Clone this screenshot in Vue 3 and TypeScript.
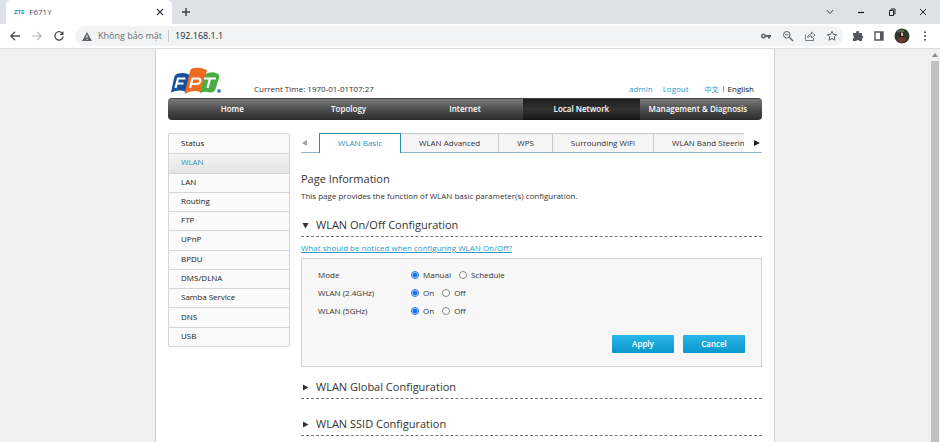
<script setup lang="ts">
import { ref } from 'vue'

interface Option {
  value: string
  label: string
}
interface Setting {
  id: string
  label: string
  value: string
  options: Option[]
}

const navItems = ['Home', 'Topology', 'Internet', 'Local Network', 'Management & Diagnosis']
const activeNav = ref('Local Network')

const sideItems = ['Status', 'WLAN', 'LAN', 'Routing', 'FTP', 'UPnP', 'BPDU', 'DMS/DLNA', 'Samba Service', 'DNS', 'USB']
const activeSide = ref('WLAN')

const tabs = ['WLAN Basic', 'WLAN Advanced', 'WPS', 'Surrounding WiFi', 'WLAN Band Steerin']
const activeTab = ref('WLAN Basic')

const onOff: Option[] = [
  { value: 'on', label: 'On' },
  { value: 'off', label: 'Off' },
]
const settings = ref<Setting[]>([
  {
    id: 'mode',
    label: 'Mode',
    value: 'manual',
    options: [
      { value: 'manual', label: 'Manual' },
      { value: 'schedule', label: 'Schedule' },
    ],
  },
  { id: 'wlan24', label: 'WLAN (2.4GHz)', value: 'on', options: onOff },
  { id: 'wlan5', label: 'WLAN (5GHz)', value: 'on', options: onOff },
])

const address = ref('192.168.1.1')
const open = ref(true)
</script>

<template>
  <div class="browser">
    <header class="titlebar">
      <div class="tab">
        <span class="favicon">ZTE</span>
        <span class="tab-title">F671Y</span>
        <button class="icon-btn" aria-label="Close tab">
          <svg width="8" height="8" viewBox="0 0 8 8"><path d="M1 1l6 6M7 1L1 7" stroke="#3c4043" stroke-width="1.2" /></svg>
        </button>
      </div>
      <button class="icon-btn new-tab" aria-label="New tab">
        <svg width="10" height="10" viewBox="0 0 10 10"><path d="M5 1v8M1 5h8" stroke="#3c4043" stroke-width="1.4" /></svg>
      </button>
      <div class="window-controls">
        <button class="icon-btn" aria-label="Search tabs">
          <svg width="10" height="10" viewBox="0 0 10 10"><path d="M1.800 3l3.200 3.500L8.200 3" fill="none" stroke="#444" /></svg>
        </button>
        <button class="icon-btn" aria-label="Minimize">
          <svg width="10" height="10" viewBox="0 0 10 10"><path d="M2 5.500h6" stroke="#111" stroke-width="1.200" /></svg>
        </button>
        <button class="icon-btn" aria-label="Restore">
          <svg width="10" height="10" viewBox="0 0 10 10"><path d="M2.500 3.500h4v5h-4zM4 3.500v-1.500h4v5H6.500" fill="none" stroke="#222" /></svg>
        </button>
        <button class="icon-btn" aria-label="Close window">
          <svg width="10" height="10" viewBox="0 0 10 10"><path d="M2 2l6 6M8 2L2 8" stroke="#222" /></svg>
        </button>
      </div>
    </header>

    <div class="toolbar">
      <div class="history">
        <button class="icon-btn" aria-label="Back">
          <svg width="12" height="12" viewBox="0 0 12 12"><path d="M11 6H2M6 1.800L1.800 6 6 10.200" fill="none" stroke="#4b4e52" stroke-width="1.300" /></svg>
        </button>
        <button class="icon-btn" aria-label="Forward">
          <svg width="12" height="12" viewBox="0 0 12 12"><path d="M1 6h9M6 1.800L10.200 6 6 10.200" fill="none" stroke="#b0b3b6" stroke-width="1.200" /></svg>
        </button>
        <button class="icon-btn" aria-label="Reload">
          <svg width="12" height="12" viewBox="0 0 12 12"><path d="M9.600 3.600A4.200 4.200 0 1 0 10.200 6.600" fill="none" stroke="#4b4e52" stroke-width="1.300" /><path d="M10.500 1v4H6.500z" fill="#4b4e52" /></svg>
        </button>
      </div>
      <div class="omnibox">
        <svg width="10" height="9" viewBox="0 0 10 9"><path d="M5 0l5 9H0z" fill="#5f6368" /><path d="M5 3v3M5 7v1" stroke="#f1f3f4" /></svg>
        <label class="insecure" for="address">Không bảo mật</label>
        <input id="address" v-model="address" class="address" type="text" />
        <button class="icon-btn" aria-label="Passwords">
          <svg width="12" height="12" viewBox="0 0 12 12"><path d="M3.500 3.500a2.500 2.500 0 1 0 2.300 3.400H8v1.600h2V6.900h1V5H5.800A2.500 2.500 0 0 0 3.500 3.500z" fill="#5f6368" /><circle cx="3.500" cy="6" r="1" fill="#f1f3f4" /></svg>
        </button>
        <button class="icon-btn" aria-label="Zoom">
          <svg width="12" height="12" viewBox="0 0 12 12"><circle cx="4.800" cy="4.800" r="3.300" fill="none" stroke="#5f6368" /><path d="M7.300 7.300l3.700 3.700" stroke="#5f6368" stroke-width="1.300" /><path d="M3.200 4.800h3.200" stroke="#5f6368" /></svg>
        </button>
        <button class="icon-btn" aria-label="Share">
          <svg width="12" height="12" viewBox="0 0 12 12"><path d="M1.500 4.500v6h8V8M3.500 8C3.800 5.500 5.200 4 7.500 4V2l3.500 3-3.500 3V6C5.800 6 4.500 6.500 3.500 8z" fill="none" stroke="#6b6f73" stroke-width="0.900" /></svg>
        </button>
        <button class="icon-btn" aria-label="Bookmark">
          <svg width="12" height="12" viewBox="0 0 12 12"><path d="M6 1.300l1.400 3.100 3.300.3-2.500 2.200.8 3.300L6 8.500l-3 1.700.8-3.300L1.300 4.700l3.300-.3z" fill="none" stroke="#5f6368" /></svg>
        </button>
      </div>
      <div class="extras">
        <button class="icon-btn" aria-label="Extensions">
          <svg width="12" height="12" viewBox="0 0 12 12"><path d="M1 3h3.200a1.500 1.500 0 1 1 2.800 0H10v2.700a1.300 1.300 0 1 1 0 2.600V11H7.200a1.500 1.500 0 0 0-2.900 0H1V8.400a1.500 1.500 0 0 0 0-2.800z" fill="#55585c" /></svg>
        </button>
        <button class="icon-btn" aria-label="Side panel">
          <svg width="12" height="12" viewBox="0 0 12 12"><path d="M2 2h8v8H2z" fill="none" stroke="#55585c" stroke-width="1.400" /><path d="M7 2h3v8H7z" fill="#55585c" /></svg>
        </button>
        <button class="icon-btn" aria-label="Profile">
          <svg width="16" height="16" viewBox="0 0 16 16"><circle cx="8" cy="8" r="7.500" fill="#30382b" /><path d="M3 3.500Q7 0 11 2.500L9 5H5z" fill="#56684b" /><path d="M6 4h4v5H6z" fill="#191310" /><path d="M7 4.500h2.200V8H7z" fill="#d8b8a0" /><path d="M3 10l4-1 5 1-1 3.500-4 1.500-3-2z" fill="#65392f" /></svg>
        </button>
        <button class="icon-btn" aria-label="Menu">
          <svg width="12" height="12" viewBox="0 0 12 12" fill="#4b4e52"><circle cx="6" cy="2.200" r="1" /><circle cx="6" cy="6" r="1" /><circle cx="6" cy="9.800" r="1" /></svg>
        </button>
      </div>
    </div>

    <div class="viewport">
      <div class="canvas">
        <div class="page">
          <div class="masthead">
            <svg class="logo" width="52" height="28" viewBox="0 0 52 28" role="img" aria-label="FPT">
              <path d="M4 11Q5 7 8 6.500Q15 5 20 8L16 25Q9 22 1 25.500z" fill="#164fa0" />
              <path d="M20 4Q21 1 24 1Q30 0 37 3L31 25.500Q23 22 14.500 27z" fill="#f06b22" />
              <path d="M35.500 7Q41 4 47 6.500Q50 7.500 49 11L45.500 22Q44 26 40 25.500Q35 24 30 26z" fill="#49ad45" />
              <g fill="none" stroke="#fff" stroke-width="2.200">
                <path d="M5.500 21L8 11.500H15.500M7 16.500H13.500" />
                <path d="M20 21L22.500 11.500H28.500Q31.500 12 30 15Q29 17 26.500 17H21.500" />
                <path d="M34 11.500H46M40 11.500L37.500 21" />
              </g>
              <circle cx="49" cy="24" r="1.900" fill="#3f82b8" />
            </svg>
            <span class="clock">Current Time: 1970-01-01T07:27</span>
            <div class="account">
              <a href="#user">admin</a>
              <a href="#logout">Logout</a>
              <span class="langs"><a href="#zh" class="zh" lang="zh">中文</a><i class="bar"></i><span class="current">English</span></span>
            </div>
          </div>

          <nav class="mainnav">
            <a v-for="item in navItems" :key="item" href="#nav" :class="{ active: item === activeNav }" @click.prevent="activeNav = item">{{ item }}</a>
          </nav>

          <div class="columns">
            <nav class="sidebar">
              <a v-for="item in sideItems" :key="item" href="#side" :class="{ active: item === activeSide }" @click.prevent="activeSide = item">{{ item }}</a>
            </nav>

            <main class="content">
              <div class="tabbar">
                <button class="arrow prev" aria-label="Previous tabs"><svg width="5" height="6" viewBox="0 0 5 6"><path d="M5 0v6L0 3z" fill="#a0a0a0" /></svg></button>
                <div class="tabs">
                  <button v-for="tab in tabs" :key="tab" :class="{ active: tab === activeTab }" @click="activeTab = tab">{{ tab }}</button>
                </div>
                <button class="arrow next" aria-label="More tabs"><svg width="6" height="6" viewBox="0 0 6 6"><path d="M0 0v6l6-3z" fill="#222" /></svg></button>
              </div>

              <h1>Page Information</h1>
              <p class="intro">This page provides the function of WLAN basic parameter(s) configuration.</p>

              <section>
                <h2><button class="section-toggle" @click="open = !open">
                  <svg width="7" height="7" viewBox="0 0 7 7"><path d="M0.500 1h6L3.500 6.500z" fill="#333" /></svg>WLAN On/Off Configuration
                </button></h2>
                <a class="hint" href="#help">What should be noticed when configuring WLAN On/Off?</a>
                <form v-if="open" class="panel" @submit.prevent>
                  <div v-for="s in settings" :key="s.id" class="setting" role="radiogroup" :aria-labelledby="s.id">
                    <span :id="s.id" class="name">{{ s.label }}</span>
                    <label v-for="o in s.options" :key="o.value">
                      <input v-model="s.value" type="radio" :name="s.id" :value="o.value" />{{ o.label }}
                    </label>
                  </div>
                  <div class="actions">
                    <button type="submit">Apply</button>
                    <button type="reset">Cancel</button>
                  </div>
                </form>
              </section>

              <section v-for="name in ['WLAN Global Configuration', 'WLAN SSID Configuration']" :key="name" class="closed">
                <h2><button class="section-toggle">
                  <svg width="7" height="7" viewBox="0 0 7 7"><path d="M1 0.500v6l5.500-3z" fill="#333" /></svg>{{ name }}
                </button></h2>
              </section>
            </main>
          </div>
        </div>
      </div>
      <div class="scrollbar">
        <svg width="6" height="4" viewBox="0 0 6 4"><path d="M0 4h6L3 0z" fill="#8a8a8a" /></svg>
        <span class="thumb"></span>
      </div>
    </div>
  </div>
</template>

<style>
body {
  margin: 0;
}
</style>

<style scoped>
.browser {
  display: flex;
  flex-direction: column;
  height: 100vh;
  overflow: hidden;
  background: #f0f0f0;
  color: #333;
  font: 8px/12px "Open Sans", "Noto Sans", sans-serif;
}
.browser * {
  box-sizing: border-box;
}
button,
input {
  margin: 0;
  padding: 0;
  border: 0;
  background: none;
  color: inherit;
  font: inherit;
}
a {
  color: #2a9bcb;
  text-decoration: none;
}
svg {
  display: block;
  flex: none;
}
.icon-btn {
  flex: none;
}
.titlebar {
  display: flex;
  flex: none;
  align-items: center;
  height: 24px;
  padding: 0 12px 0 6px;
  background: #dee1e6;
}
.tab {
  display: flex;
  align-items: center;
  gap: 5px;
  width: 166px;
  height: 24px;
  padding: 0 8px;
  border-radius: 5px 5px 0 0;
  background: #fff;
}
.favicon {
  color: #1b92b4;
  font-size: 6px;
  font-weight: 700;
}
.tab-title {
  flex: 1;
  color: #45494d;
}
.new-tab {
  margin-left: 9px;
}
.window-controls {
  display: flex;
  gap: 21px;
  margin-left: auto;
}
.toolbar {
  display: flex;
  flex: none;
  align-items: center;
  height: 25px;
  padding: 0 9px;
  border-bottom: 1px solid #dcdcdc;
  background: #fff;
}
.history {
  display: flex;
  gap: 10px;
}
.omnibox {
  display: flex;
  flex: 1;
  align-items: center;
  gap: 10px;
  height: 20px;
  margin-left: 10px;
  padding: 0 5px 0 7px;
  border-radius: 10px;
  background: #f1f3f4;
  font-size: 9px;
}
.insecure {
  margin-left: -4px;
  padding-right: 6px;
  border-right: 1px solid #c6c8ca;
  color: #6a6e73;
}
.address {
  flex: 1;
  min-width: 0;
  margin-left: -4px;
  color: #26282b;
  outline: 0;
}
.extras {
  display: flex;
  align-items: center;
  gap: 9px;
  margin-left: 9px;
}
.viewport {
  display: flex;
  flex: 1;
  min-height: 0;
}
.canvas {
  flex: 1;
  overflow: hidden;
}
.page {
  max-width: 620px;
  min-height: 100%;
  margin: 0 auto;
  padding: 16px 12px;
  border: solid #d2d2d2;
  border-width: 0 1px;
  background: #fff;
}
.scrollbar {
  display: flex;
  flex-direction: column;
  align-items: center;
  width: 10px;
  padding-top: 4px;
  background: #f1f1f1;
}
.thumb {
  flex: 1;
  width: 8px;
  margin-top: 4px;
  background: #c1c1c1;
}
.masthead {
  display: flex;
  align-items: flex-end;
  height: 33px;
  padding: 0 8px 3px 2px;
}
.logo {
  align-self: flex-start;
  margin-top: 2px;
}
.clock {
  margin-left: 32px;
}
.account {
  display: flex;
  gap: 10px;
  margin-left: auto;
}
.langs {
  display: flex;
  align-items: center;
  gap: 4px;
  margin-left: 6px;
}
.zh {
  font-family: "Noto Sans CJK SC", sans-serif;
  font-size: 7px;
}
.current {
  color: #111;
}
.bar {
  width: 1px;
  height: 6px;
  background: #77a8bd;
}
.mainnav {
  display: grid;
  grid-template-columns: repeat(5, 1fr);
  height: 22px;
  padding: 0 6px;
  border-top: 1px solid #444;
  border-radius: 4px;
  background: linear-gradient(#7a7a7a, #4d4d4d 50%, #2c2c2c);
  line-height: 19px;
  text-align: center;
}
.mainnav a {
  color: #fff;
  font-weight: 600;
  white-space: nowrap;
}
.mainnav .active {
  background: linear-gradient(#1c1c1c, #333 50%, #141414);
}
.columns {
  display: flex;
  align-items: flex-start;
  gap: 11px;
  margin-top: 13px;
}
.sidebar {
  display: grid;
  flex: none;
  grid-auto-rows: 1fr;
  width: 122px;
  min-height: 214px;
  border: 1px solid #d6d6d6;
  border-radius: 2px;
  background: #fafafa;
}
.sidebar a {
  display: flex;
  align-items: center;
  padding: 0 0 2px 12px;
  color: #222;
}
.sidebar a + a {
  border-top: 1px solid #d6d6d6;
}
.sidebar .active {
  background: linear-gradient(#f3f3f3, #e4e4e4);
  color: #2a93c0;
}
.content {
  flex: 1;
  min-width: 0;
}
.tabbar {
  display: flex;
  height: 20px;
}
.arrow {
  display: flex;
  flex: none;
  align-items: center;
  width: 18px;
  border-bottom: 1px solid #90b5c8;
}
.prev {
  padding-left: 1px;
}
.next {
  justify-content: flex-end;
  padding-right: 2px;
}
.tabs {
  display: flex;
  flex: 1;
  min-width: 0;
  overflow: hidden;
}
.tabs button {
  flex: none;
  padding: 0 18px 1px;
  border: solid #c9c9c9;
  border-width: 1px 1px 1px 0;
  border-bottom-color: #90b5c8;
  background: #f5f5f5;
  white-space: nowrap;
}
.tabs .active {
  border-color: #2a8fb0;
  border-width: 1px 1px 0;
  background: #fff;
  color: #2a93c0;
}
h1,
h2 {
  margin: 0;
  font-size: 11px;
  font-weight: 400;
  line-height: 16px;
}
h1 {
  margin-top: 18px;
}
.intro {
  margin: 3px 0 0;
}
h2 {
  height: 20px;
  border-bottom: 1px dashed #777;
}
section {
  margin-top: 15px;
}
.closed {
  margin-top: 12px;
}
.closed + .closed {
  margin-top: 17px;
}
.section-toggle {
  display: flex;
  align-items: center;
  gap: 7px;
  padding-left: 1px;
}
.hint {
  display: block;
  width: fit-content;
  margin-top: 5px;
  text-decoration: underline;
}
.panel {
  margin-top: 4px;
  padding: 7px 16px 13px;
  border: 1px solid #d2d2d2;
  background: #f7f7f7;
}
.setting {
  display: flex;
  align-items: center;
  gap: 8px;
  height: 18px;
}
.name {
  width: 85px;
}
.setting label {
  display: flex;
  align-items: center;
  gap: 4px;
}
.setting input {
  width: 8px;
  height: 8px;
  border: 1px solid #888;
  border-radius: 50%;
  appearance: none;
  background: #fff;
}
.setting input:checked {
  border-color: #1a73e8;
  background: radial-gradient(circle, #1a73e8 0 2px, #fff 3px);
}
.actions {
  display: flex;
  justify-content: flex-end;
  gap: 9px;
  margin-top: 15px;
}
.actions button {
  width: 62px;
  height: 18px;
  border-radius: 1px;
  background: linear-gradient(#2bb5e8, #0a97cd);
  color: #fff;
  font-weight: 600;
}
</style>
